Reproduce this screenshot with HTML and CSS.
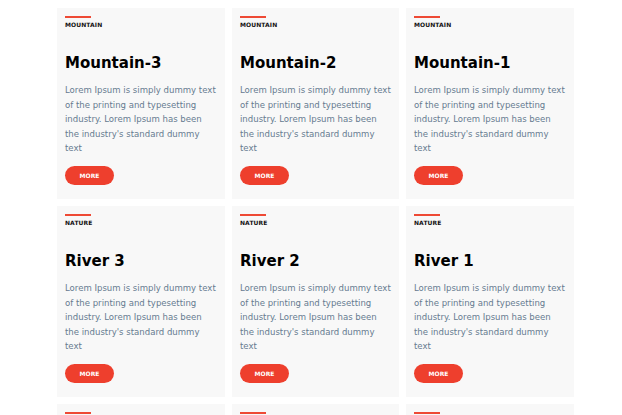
FILE: index.html
```html
<!DOCTYPE html>
<html>
<head>
<meta charset="utf-8">
<link rel="stylesheet" href="styles.css">
</head>
<body>
<div class="grid">
  <div class="card"><span class="bar"></span><div class="cat">MOUNTAIN</div><h2>Mountain-3</h2><p>Lorem Ipsum is simply dummy text of the printing and typesetting industry. Lorem Ipsum has been the industry's standard dummy text</p><a class="btn">MORE</a></div>
  <div class="card"><span class="bar"></span><div class="cat">MOUNTAIN</div><h2>Mountain-2</h2><p>Lorem Ipsum is simply dummy text of the printing and typesetting industry. Lorem Ipsum has been the industry's standard dummy text</p><a class="btn">MORE</a></div>
  <div class="card"><span class="bar"></span><div class="cat">MOUNTAIN</div><h2>Mountain-1</h2><p>Lorem Ipsum is simply dummy text of the printing and typesetting industry. Lorem Ipsum has been the industry's standard dummy text</p><a class="btn">MORE</a></div>
  <div class="card"><span class="bar"></span><div class="cat">NATURE</div><h2>River 3</h2><p>Lorem Ipsum is simply dummy text of the printing and typesetting industry. Lorem Ipsum has been the industry's standard dummy text</p><a class="btn">MORE</a></div>
  <div class="card"><span class="bar"></span><div class="cat">NATURE</div><h2>River 2</h2><p>Lorem Ipsum is simply dummy text of the printing and typesetting industry. Lorem Ipsum has been the industry's standard dummy text</p><a class="btn">MORE</a></div>
  <div class="card"><span class="bar"></span><div class="cat">NATURE</div><h2>River 1</h2><p>Lorem Ipsum is simply dummy text of the printing and typesetting industry. Lorem Ipsum has been the industry's standard dummy text</p><a class="btn">MORE</a></div>
  <div class="card"><span class="bar"></span></div>
  <div class="card"><span class="bar"></span></div>
  <div class="card"><span class="bar"></span></div>
</div>
</body>
</html>
```
FILE: styles.css
```css
html, body {
  margin: 0;
  padding: 0;
  background: #ffffff;
  overflow: hidden;
}
body {
  font-family: "DejaVu Sans", sans-serif;
}
.grid {
  display: grid;
  grid-template-columns: 168px 167px 168px;
  column-gap: 7px;
  row-gap: 7px;
  margin: 8px 0 0 57px;
}
.card {
  background: #f8f8f8;
  height: 191px;
  box-sizing: border-box;
  padding: 8px 4px 0 8px;
  display: flex;
  flex-direction: column;
  align-items: flex-start;
}
.bar {
  display: block;
  width: 26px;
  height: 2px;
  background: #ee4a35;
}
.cat {
  margin-top: 3px;
  font-size: 6px;
  font-weight: bold;
  color: #111;
  line-height: 8px;
  letter-spacing: 0.1px;
}
h2 {
  margin: 24px 0 0 0;
  font-size: 15px;
  line-height: 20px;
  font-weight: bold;
  color: #000;
}
p {
  margin: 10px 0 0 0;
  width: 152px;
  font-size: 8.55px;
  line-height: 14.5px;
  color: #667b90;
}
.btn {
  margin-top: 10.5px;
  width: 49px;
  height: 19px;
  border-radius: 10px;
  background: #ee3f2d;
  color: #fff;
  font-size: 6px;
  font-weight: bold;
  display: flex;
  align-items: center;
  justify-content: center;
}
```
